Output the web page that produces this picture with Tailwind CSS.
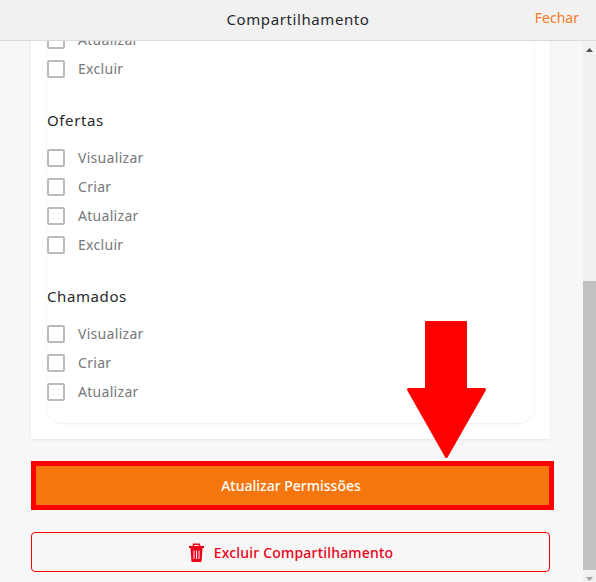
<!DOCTYPE html>
<html lang="pt-BR">
<head>
    <meta charset="UTF-8">
    <meta name="viewport" content="width=device-width, initial-scale=1.0">
    <title>Compartilhamento</title>
    <script src="https://cdn.jsdelivr.net/npm/@tailwindcss/browser@4"></script>
</head>
<body class="relative h-[582px] w-[596px] overflow-hidden bg-[#f7f7f7] font-['Noto_Sans',sans-serif]">
    <!-- cabecalho -->
    <header class="relative z-10 flex h-[41px] items-center justify-center border-b border-[#dadada] bg-[#f1f1f1]">
        <h1 class="-mt-[2px] text-[15px] tracking-[0.6px] text-[#26282b]">Compartilhamento</h1>
        <button class="absolute right-[17px] top-[7px] text-[14px] text-[#f97a1f]">Fechar</button>
    </header>

    <div class="flex h-[541px]">
        <div class="w-[583px] overflow-hidden pl-[31px] pr-[33px]">
            <!-- cartao de permissoes, rolado -->
            <section class="-mt-[500px] h-[898px] bg-white px-4 pb-4 shadow-[0_1px_2px_rgba(0,0,0,0.08)]">
                <div class="flex h-[882px] flex-col justify-end rounded-b-2xl pb-[17px] shadow-[0_1px_2px_rgba(0,0,0,0.08)]">
                    <div class="flex h-[29px] items-center gap-[13px]">
                        <span class="h-[18px] w-[18px] rounded-[2px] border-2 border-[#bbbbbb]"></span>
                        <span class="text-[14px] tracking-[0.3px] text-[#77787b]">Atualizar</span>
                    </div>
                    <div class="flex h-[29px] items-center gap-[13px]">
                        <span class="h-[18px] w-[18px] rounded-[2px] border-2 border-[#bbbbbb]"></span>
                        <span class="text-[14px] tracking-[0.3px] text-[#77787b]">Excluir</span>
                    </div>

                    <h2 class="mb-[12px] mt-[26px] h-[22px] text-[15px] leading-[22px] tracking-[0.6px] text-[#26282b]">Ofertas</h2>
                    <div class="flex h-[29px] items-center gap-[13px]">
                        <span class="h-[18px] w-[18px] rounded-[2px] border-2 border-[#bbbbbb]"></span>
                        <span class="text-[14px] tracking-[0.3px] text-[#77787b]">Visualizar</span>
                    </div>
                    <div class="flex h-[29px] items-center gap-[13px]">
                        <span class="h-[18px] w-[18px] rounded-[2px] border-2 border-[#bbbbbb]"></span>
                        <span class="text-[14px] tracking-[0.3px] text-[#77787b]">Criar</span>
                    </div>
                    <div class="flex h-[29px] items-center gap-[13px]">
                        <span class="h-[18px] w-[18px] rounded-[2px] border-2 border-[#bbbbbb]"></span>
                        <span class="text-[14px] tracking-[0.3px] text-[#77787b]">Atualizar</span>
                    </div>
                    <div class="flex h-[29px] items-center gap-[13px]">
                        <span class="h-[18px] w-[18px] rounded-[2px] border-2 border-[#bbbbbb]"></span>
                        <span class="text-[14px] tracking-[0.3px] text-[#77787b]">Excluir</span>
                    </div>

                    <h2 class="mb-[12px] mt-[26px] h-[22px] text-[15px] leading-[22px] tracking-[0.6px] text-[#26282b]">Chamados</h2>
                    <div class="flex h-[29px] items-center gap-[13px]">
                        <span class="h-[18px] w-[18px] rounded-[2px] border-2 border-[#bbbbbb]"></span>
                        <span class="text-[14px] tracking-[0.3px] text-[#77787b]">Visualizar</span>
                    </div>
                    <div class="flex h-[29px] items-center gap-[13px]">
                        <span class="h-[18px] w-[18px] rounded-[2px] border-2 border-[#bbbbbb]"></span>
                        <span class="text-[14px] tracking-[0.3px] text-[#77787b]">Criar</span>
                    </div>
                    <div class="flex h-[29px] items-center gap-[13px]">
                        <span class="h-[18px] w-[18px] rounded-[2px] border-2 border-[#bbbbbb]"></span>
                        <span class="text-[14px] tracking-[0.3px] text-[#77787b]">Atualizar</span>
                    </div>
                </div>
            </section>

            <button class="mt-[22px] flex h-[49px] w-[523px] items-center justify-center border-[5px] border-[#ff0000] bg-[#f5760c] pr-[3px] text-[14px] font-medium text-white">Atualizar Permissões</button>

            <button class="mt-[22px] flex h-[40px] w-[519px] items-center justify-center gap-[9px] rounded-[4px] border border-[#ee0000] text-[14px] font-medium tracking-[0.2px] text-[#ee0018]">
                <svg class="h-[19px] w-[17px]" viewBox="0 0 17 19" fill="none">
                    <path d="M1 4h15" stroke="currentColor" stroke-width="2"/>
                    <path d="M5.500 3.500V1.300h6v2.200" stroke="currentColor" stroke-width="1.500"/>
                    <path d="M2.500 5h12l-.9 13a1 1 0 0 1-1 1H4.400a1 1 0 0 1-1-1z" fill="currentColor"/>
                    <path d="M6 7.500v8.500M8.500 7.500v8.500M11 7.500v8.500" stroke="#f7f7f7" stroke-width="1"/>
                </svg>
                Excluir Compartilhamento
            </button>
        </div>

        <!-- barra de rolagem -->
        <div class="flex w-[13px] flex-col items-center bg-[#f1f1f1]">
            <svg class="mt-[7px] h-[4px] w-[7px]" viewBox="0 0 7 4"><path d="M3.500 0L7 4H0z" fill="#505050"/></svg>
            <div class="mt-[229px] h-[289px] w-full bg-[#c1c1c1]"></div>
            <svg class="mt-[7px] h-[4px] w-[7px]" viewBox="0 0 7 4"><path d="M0 0h7L3.500 4z" fill="#a3a3a3"/></svg>
        </div>
    </div>

    <!-- seta -->
    <svg class="absolute left-[407px] top-[321px] h-[138px] w-[79px]" viewBox="0 0 79 138">
        <path d="M19 0h40a1 1 0 0 1 1 1v66h17.500a1.500 1.500 0 0 1 1.300 2.200L40.500 136.500a1.300 1.300 0 0 1-2.200 0L.2 69.200A1.500 1.500 0 0 1 1.500 67H18V1a1 1 0 0 1 1-1z" fill="#ff0000"/>
    </svg>
</body>
</html>
